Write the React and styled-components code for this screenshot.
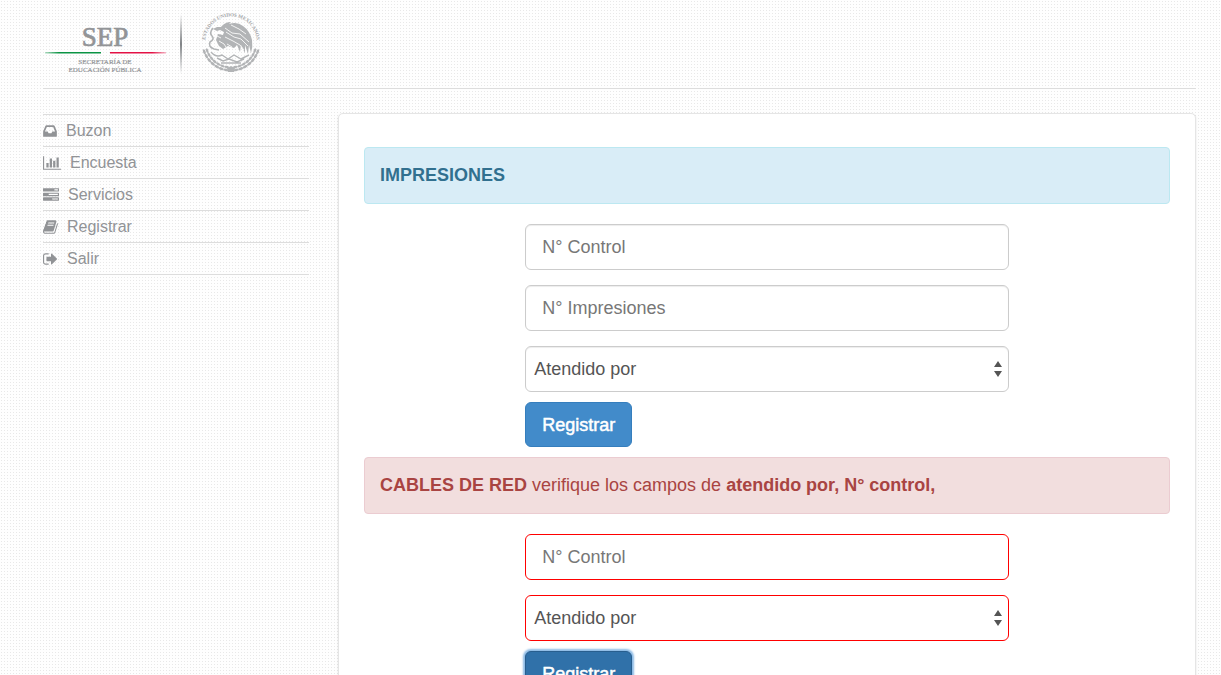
import React from "react";
import styled, { createGlobalStyle, css } from "styled-components";

const GlobalStyle = createGlobalStyle`
  *, *::before, *::after { box-sizing: border-box; }
  body {
    margin: 0;
    color: #555;
    font-family: "Liberation Sans", Arial, Helvetica, sans-serif;
    font-size: 16px;
    background-color: #fefefe;
    background-image: url("data:image/svg+xml,%3Csvg xmlns='http://www.w3.org/2000/svg' width='3' height='3'%3E%3Crect x='1' y='1' width='1' height='1' fill='%23e8e8e8'/%3E%3C/svg%3E");
  }
`;

const Page = styled.div`
  padding: 0 25px 40px 43px;
`;

const Header = styled.header`
  height: 89px;
  border-bottom: 1px solid #ddd;
`;

const LogoLink = styled.a`
  display: block;
  width: 224px;
  svg { display: block; }
`;

const Columns = styled.div`
  display: grid;
  grid-template-columns: 266px minmax(0, 1fr);
  column-gap: 29px;
  align-items: start;
  padding-top: 24px;
`;

const Menu = styled.ul`
  list-style: none;
  margin: 1px 0 0;
  padding: 0;
  border-top: 1px solid #ddd;
`;

const MenuItem = styled.li`
  border-bottom: 1px solid #ddd;
`;

const MenuLink = styled.a`
  display: flex;
  align-items: center;
  gap: 9px;
  height: 31px;
  color: #919396;
  line-height: 20px;
  text-decoration: none;
  svg { flex: none; fill: currentColor; }
`;

const Panel = styled.main`
  padding: 33px 25px 40px;
  background: #fff;
  border: 1px solid #e5e5e5;
  border-radius: 5px;
  box-shadow: 0 1px 2px rgba(0, 0, 0, 0.12);
`;

const tones = {
  info: css`
    color: #31708f;
    background: #d9edf7;
    border-color: #bce8f1;
  `,
  danger: css`
    color: #a94442;
    background: #f2dede;
    border-color: #ebccd1;
  `,
};

const Alert = styled.div`
  margin-bottom: 20px;
  padding: 15px;
  border: 1px solid;
  border-radius: 4px;
  font-size: 18px;
  line-height: 25px;
  ${(p) => tones[p.$tone]}
`;

const Form = styled.form`
  width: 60%;
  margin: 0 auto 10px;
`;

const control = css`
  display: block;
  width: 100%;
  height: 46px;
  border: 1px solid ${(p) => (p.$invalid ? "#f00" : "#ccc")};
  border-radius: 6px;
  background: #fff;
  box-shadow: ${(p) => (p.$invalid ? "none" : "inset 0 1px 1px rgba(0, 0, 0, 0.075)")};
  color: #555;
  font: 18px/24px "Liberation Sans", Arial, Helvetica, sans-serif;
`;

const TextBox = styled.input`
  ${control}
  margin-bottom: 15px;
  padding: 10px 16px;
  &::placeholder { color: #777; opacity: 1; }
`;

const SelectWrap = styled.div`
  position: relative;
  margin-bottom: 10px;
  svg {
    position: absolute;
    top: 15px;
    right: 7px;
    fill: #555;
    pointer-events: none;
  }
`;

const Select = styled.select`
  ${control}
  appearance: none;
  padding: 0 24px 0 8px;
`;

const SubmitButton = styled.button`
  display: block;
  height: 45px;
  padding: 0 16px;
  border: 1px solid ${(p) => (p.$active ? "#285e8e" : "#357ebd")};
  border-radius: 6px;
  background: ${(p) => (p.$active ? "#3071a9" : "#428bca")};
  box-shadow: ${(p) => (p.$active ? "0 0 2px 2px #8dbbe6" : "none")};
  color: #fff;
  font: 18px/24px "Liberation Sans", Arial, Helvetica, sans-serif;
  -webkit-text-stroke: 0.5px #fff;
`;

const icons = {
  inbox: {
    width: 14,
    box: "128 0 1536 1792",
    d: "M1151 960h316q-1-3-2.5-8t-2.5-8l-212-496h-708l-212 496q-1 2-2.5 8t-2.5 8h316l95 192h320zm513 30v482q0 26-19 45t-45 19h-1408q-26 0-45-19t-19-45v-482q0-62 25-123l238-552q10-25 36.5-42t52.5-17h832q26 0 52.5 17t36.5 42l238 552q25 61 25 123z",
  },
  chart: {
    width: 18,
    box: "0 0 2048 1792",
    d: "M640 896v512h-256v-512h256zm384-512v1024h-256v-1024h256zm1024 1152v128h-2048v-1536h128v1408h1920zm-640-896v768h-256v-768h256zm384-384v1152h-256v-1152h256z",
  },
  tasks: {
    width: 16,
    box: "0 0 1792 1792",
    d: "M1024 1408h640v-128h-640v128zm-384-512h1024v-128h-1024v128zm640-512h384v-128h-384v128zm512 832v256q0 26-19 45t-45 19h-1664q-26 0-45-19t-19-45v-256q0-26 19-45t45-19h1664q26 0 45 19t19 45zm0-512v256q0 26-19 45t-45 19h-1664q-26 0-45-19t-19-45v-256q0-26 19-45t45-19h1664q26 0 45 19t19 45zm0-512v256q0 26-19 45t-45 19h-1664q-26 0-45-19t-19-45v-256q0-26 19-45t45-19h1664q26 0 45 19t19 45z",
  },
  book: {
    width: 15,
    box: "64 0 1680 1792",
    d: "M1703 478q40 57 18 129l-275 906q-19 64-76.5 107.5t-122.5 43.5h-923q-77 0-148.5-53.5t-99.5-131.5q-24-67-2-127 0-4 3-27t4-37q1-8-3-21.5t-3-19.5q2-11 8-21t16.5-23.5 16.5-23.5q23-38 45-91.5t30-91.5q3-10 .5-30t-.5-28q3-11 17-28t17-23q21-36 42-92t25-90q1-9-2.5-32t.5-28q4-13 22-30.5t22-22.5q19-26 42.5-84.5t27.5-96.5q1-8-3-25.5t-2-26.5q2-8 9-18t18-23 17-21q8-12 16.5-30.5t15-35 16-36 19.5-32 26.5-23.5 36-11.5 47.5 5.5l-1 3q38-9 51-9h761q74 0 114 56t18 130l-274 906q-36 119-71.5 153.5t-128.5 34.5h-869q-27 0-38 15-11 16-1 43 24 70 144 70h923q29 0 56-15.5t35-41.5l300-987q7-22 5-57 38 15 59 43zm-1064 2q-4 13 2 22.5t20 9.5h608q13 0 25.5-9.5t16.5-22.5l21-64q4-13-2-22.5t-20-9.5h-608q-13 0-25.5 9.5t-16.5 22.5zm-83 256q-4 13 2 22.5t20 9.5h608q13 0 25.5-9.5t16.5-22.5l21-64q4-13-2-22.5t-20-9.5h-608q-13 0-25.5 9.5t-16.5 22.5z",
  },
  signOut: {
    width: 15,
    box: "64 0 1680 1792",
    d: "M704 1440q0 4 1 20t.5 26.5-3 23.5-10 19.5-20.5 6.5h-320q-119 0-203.5-84.5t-84.5-203.5v-704q0-119 84.5-203.5t203.5-84.5h320q13 0 22.5 9.5t9.5 22.5q0 4 1 20t.5 26.5-3 23.5-10 19.5-20.5 6.5h-320q-66 0-113 47t-47 113v704q0 66 47 113t113 47h312l11.5 1 11.5 3 8 5.5 7 9 2 13.5zm928-544q0 26-19 45l-544 544q-19 19-45 19t-45-19-19-45v-288h-448q-26 0-45-19t-19-45v-384q0-26 19-45t45-19h448v-288q0-26 19-45t45-19 45 19l544 544q19 19 19 45z",
  },
};

const menu = [
  ["inbox", "Buzon"],
  ["chart", "Encuesta"],
  ["tasks", "Servicios"],
  ["book", "Registrar"],
  ["signOut", "Salir"],
];

function Icon({ name }) {
  const { width, box, d } = icons[name];
  return (
    <svg width={width} height="16" viewBox={box} aria-hidden="true">
      <path d={d} />
    </svg>
  );
}

function Seal() {
  const leaves = [];
  for (let a = 20; a <= 160; a += 10) {
    if (a === 90) continue;
    const r = (a * Math.PI) / 180;
    const x = 188 + 27 * Math.cos(r);
    const y = 42 + 27 * Math.sin(r);
    leaves.push(
      <g key={a} transform={`translate(${x} ${y}) rotate(${a + 90})`}>
        <ellipse rx="2.6" ry="1.3" cy="-1.4" />
        <ellipse rx="2.4" ry="1.2" cy="1.6" />
      </g>
    );
  }
  return (
    <g fill="#b2b4b6">
      <path id="sealArc" d="M163 48A25.700 25.700 0 1 1 213 48" fill="none" />
      <text fontSize="5" fontWeight="bold" fontFamily="'Liberation Serif', serif" fill="#a2a4a6">
        <textPath href="#sealArc" startOffset="50%" textAnchor="middle">
          ESTADOS UNIDOS MEXICANOS
        </textPath>
      </text>
      {leaves}
      <path d="M184 68l4-2 4 2-1 4h-6z" />
      {/* eagle: raised wing, body and spread tail */}
      <path d="M178 27q4-5 10-5l-2 2q8-3 14 2 7 5 9 14 1 7-1 13l-2-8-1 9-3-9v8l-4-8-1 7-3-7-3 3-6-2-5 3-4-3-3-6 2-6 5 1 1-3-4-2-3 1-4-2 4-2z" />
      <path d="M170 28q-4 5-1 8t-2 6q-2 5 4 7l5 1" fill="none" stroke="#b2b4b6" strokeWidth="1.600" />
      <path d="M168 52q5 6 11 3l6 4 6-4 7 4 8-4M174 58l6 3 6-2 8 3 7-3M178 63h20" fill="none" stroke="#b2b4b6" strokeWidth="1.400" />
      <path d="M182 28l7 5 8 1 9 8M183 32l8 5 7 2 7 7M182 37l8 4 7 4 4 5M188 25l8 4 7 5M176 41l5 3 4 6M184 44l5 3M174 36l4 2" fill="none" stroke="#f4f4f4" strokeWidth="1" />
    </g>
  );
}

function Logo() {
  return (
    <svg width="224" height="80" viewBox="0 0 224 80" role="img" aria-label="SEP, Secretaría de Educación Pública">
      <defs>
        <linearGradient id="green"><stop stopColor="#0b9444" stopOpacity="0.300" /><stop offset="0.250" stopColor="#0b9444" /></linearGradient>
        <linearGradient id="red"><stop offset="0.750" stopColor="#e31145" /><stop offset="1" stopColor="#e31145" stopOpacity="0.300" /></linearGradient>
        <linearGradient id="bar" x2="0" y2="1"><stop stopColor="#888b8e" stopOpacity="0" /><stop offset="0.500" stopColor="#808386" /><stop offset="1" stopColor="#888b8e" stopOpacity="0" /></linearGradient>
      </defs>
      <g fill="#929497" fontFamily="'Liberation Serif', serif" textAnchor="middle">
        <text x="62" y="46" fontSize="27" stroke="#929497" strokeWidth="0.700">SEP</text>
        <text x="62" y="64" fontSize="7" stroke="#929497" strokeWidth="0.200">SECRETARÍA DE</text>
        <text x="62" y="72" fontSize="7" stroke="#929497" strokeWidth="0.200">EDUCACIÓN PÚBLICA</text>
      </g>
      <rect x="2" y="52" width="56" height="1.500" fill="url(#green)" />
      <rect x="67" y="52" width="56" height="1.500" fill="url(#red)" />
      <rect x="137" y="14" width="2" height="60" fill="url(#bar)" />
      <Seal />
    </svg>
  );
}

function AttendedBy({ invalid }) {
  return (
    <SelectWrap>
      <Select $invalid={invalid} aria-label="Atendido por" defaultValue="">
        <option value="">Atendido por</option>
      </Select>
      <svg width="8" height="16" viewBox="0 0 8 16" aria-hidden="true">
        <path d="M4 0L8 6H0zM0 10h8l-4 6z" />
      </svg>
    </SelectWrap>
  );
}

export default function App() {
  return (
    <Page>
      <GlobalStyle />
      <Header>
        <LogoLink href="#"><Logo /></LogoLink>
      </Header>
      <Columns>
        <nav>
          <Menu>
            {menu.map(([icon, label]) => (
              <MenuItem key={label}>
                <MenuLink href="#"><Icon name={icon} />{label}</MenuLink>
              </MenuItem>
            ))}
          </Menu>
        </nav>
        <Panel>
          <Alert $tone="info"><strong>IMPRESIONES</strong></Alert>
          <Form>
            <TextBox placeholder="N° Control" aria-label="N° Control" />
            <TextBox placeholder="N° Impresiones" aria-label="N° Impresiones" />
            <AttendedBy />
            <SubmitButton type="button">Registrar</SubmitButton>
          </Form>
          <Alert $tone="danger" role="alert">
            <strong>CABLES DE RED</strong> verifique los campos de <strong>atendido por, N° control,</strong>
          </Alert>
          <Form>
            <TextBox $invalid placeholder="N° Control" aria-label="N° Control" />
            <AttendedBy invalid />
            <SubmitButton type="button" $active>Registrar</SubmitButton>
          </Form>
        </Panel>
      </Columns>
    </Page>
  );
}
